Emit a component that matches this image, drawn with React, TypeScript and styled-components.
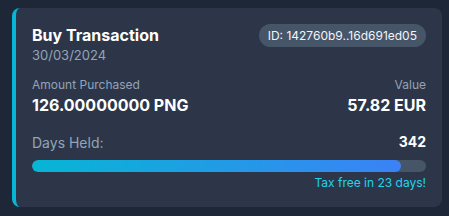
import styled, { createGlobalStyle } from 'styled-components';

const GlobalStyle = createGlobalStyle`
	html, body {
		margin: 0;
		padding: 0;
		background: #1e2738;
		font-family: Inter, "Noto Sans", sans-serif;
	}
`;

const Page = styled.div`
	padding: 8px 7px 9px 12px;
	width: 449px;
	height: 216px;
	box-sizing: border-box;
`;

const Card = styled.div`
	background: #2c3648;
	border-left: 4px solid #06b6d4;
	border-radius: 8px;
	padding: 16px;
	display: flex;
	flex-direction: column;
	height: 199px;
	box-sizing: border-box;
`;

const Header = styled.div`
	display: flex;
	justify-content: space-between;
	align-items: flex-start;
`;

const Title = styled.div`
	color: #ffffff;
	font-size: 16px;
	font-weight: 700;
	line-height: 22px;
`;

const Muted = styled.div<{ $size?: number }>`
	color: #94a3b8;
	font-size: ${({ $size }) => $size ?? 13}px;
	line-height: 18px;
`;

const Pill = styled.div`
	background: #475569;
	color: #f1f5f9;
	font-size: 12px;
	font-weight: 400;
	line-height: 23px;
	padding: 0 9px;
	border-radius: 999px;
`;

const Row = styled.div<{ $mt: number }>`
	display: flex;
	justify-content: space-between;
	align-items: flex-end;
	margin-top: ${({ $mt }) => $mt}px;
`;

const Col = styled.div<{ $right?: boolean }>`
	display: flex;
	flex-direction: column;
	align-items: ${({ $right }) => ($right ? 'flex-end' : 'flex-start')};
`;

const Amount = styled.div`
	color: #ffffff;
	font-size: 16px;
	font-weight: 700;
	line-height: 22px;
`;

const Days = styled.div`
	color: #ffffff;
	font-size: 14px;
	font-weight: 700;
	line-height: 20px;
`;

const Track = styled.div`
	margin-top: 8px;
	height: 12px;
	border-radius: 999px;
	background: #475569;
	overflow: hidden;
`;

const Fill = styled.div`
	height: 100%;
	border-radius: 999px;
	background: linear-gradient(90deg, #06b6d4, #3b82f6);
`;

const Note = styled.div`
	margin-top: 3px;
	text-align: right;
	color: #22d3ee;
	font-size: 12px;
	line-height: 16px;
`;

export default function App() {
	const held = 342;
	const pct = (held / 365) * 100;
	return (
		<>
			<GlobalStyle />
			<Page>
				<Card>
					<Header>
						<Col>
							<Title>Buy Transaction</Title>
							<Muted>30/03/2024</Muted>
						</Col>
						<Pill>ID: 142760b9..16d691ed05</Pill>
					</Header>
					<Row $mt={12}>
						<Col>
							<Muted $size={12}>Amount Purchased</Muted>
							<Amount>126.00000000 PNG</Amount>
						</Col>
						<Col $right>
							<Muted $size={12}>Value</Muted>
							<Amount>57.82 EUR</Amount>
						</Col>
					</Row>
					<Row $mt={16}>
						<Muted $size={14}>Days Held:</Muted>
						<Days>{held}</Days>
					</Row>
					<Track>
						<Fill style={{ width: `${pct}%` }} />
					</Track>
					<Note>Tax free in 23 days!</Note>
				</Card>
			</Page>
		</>
	);
}
